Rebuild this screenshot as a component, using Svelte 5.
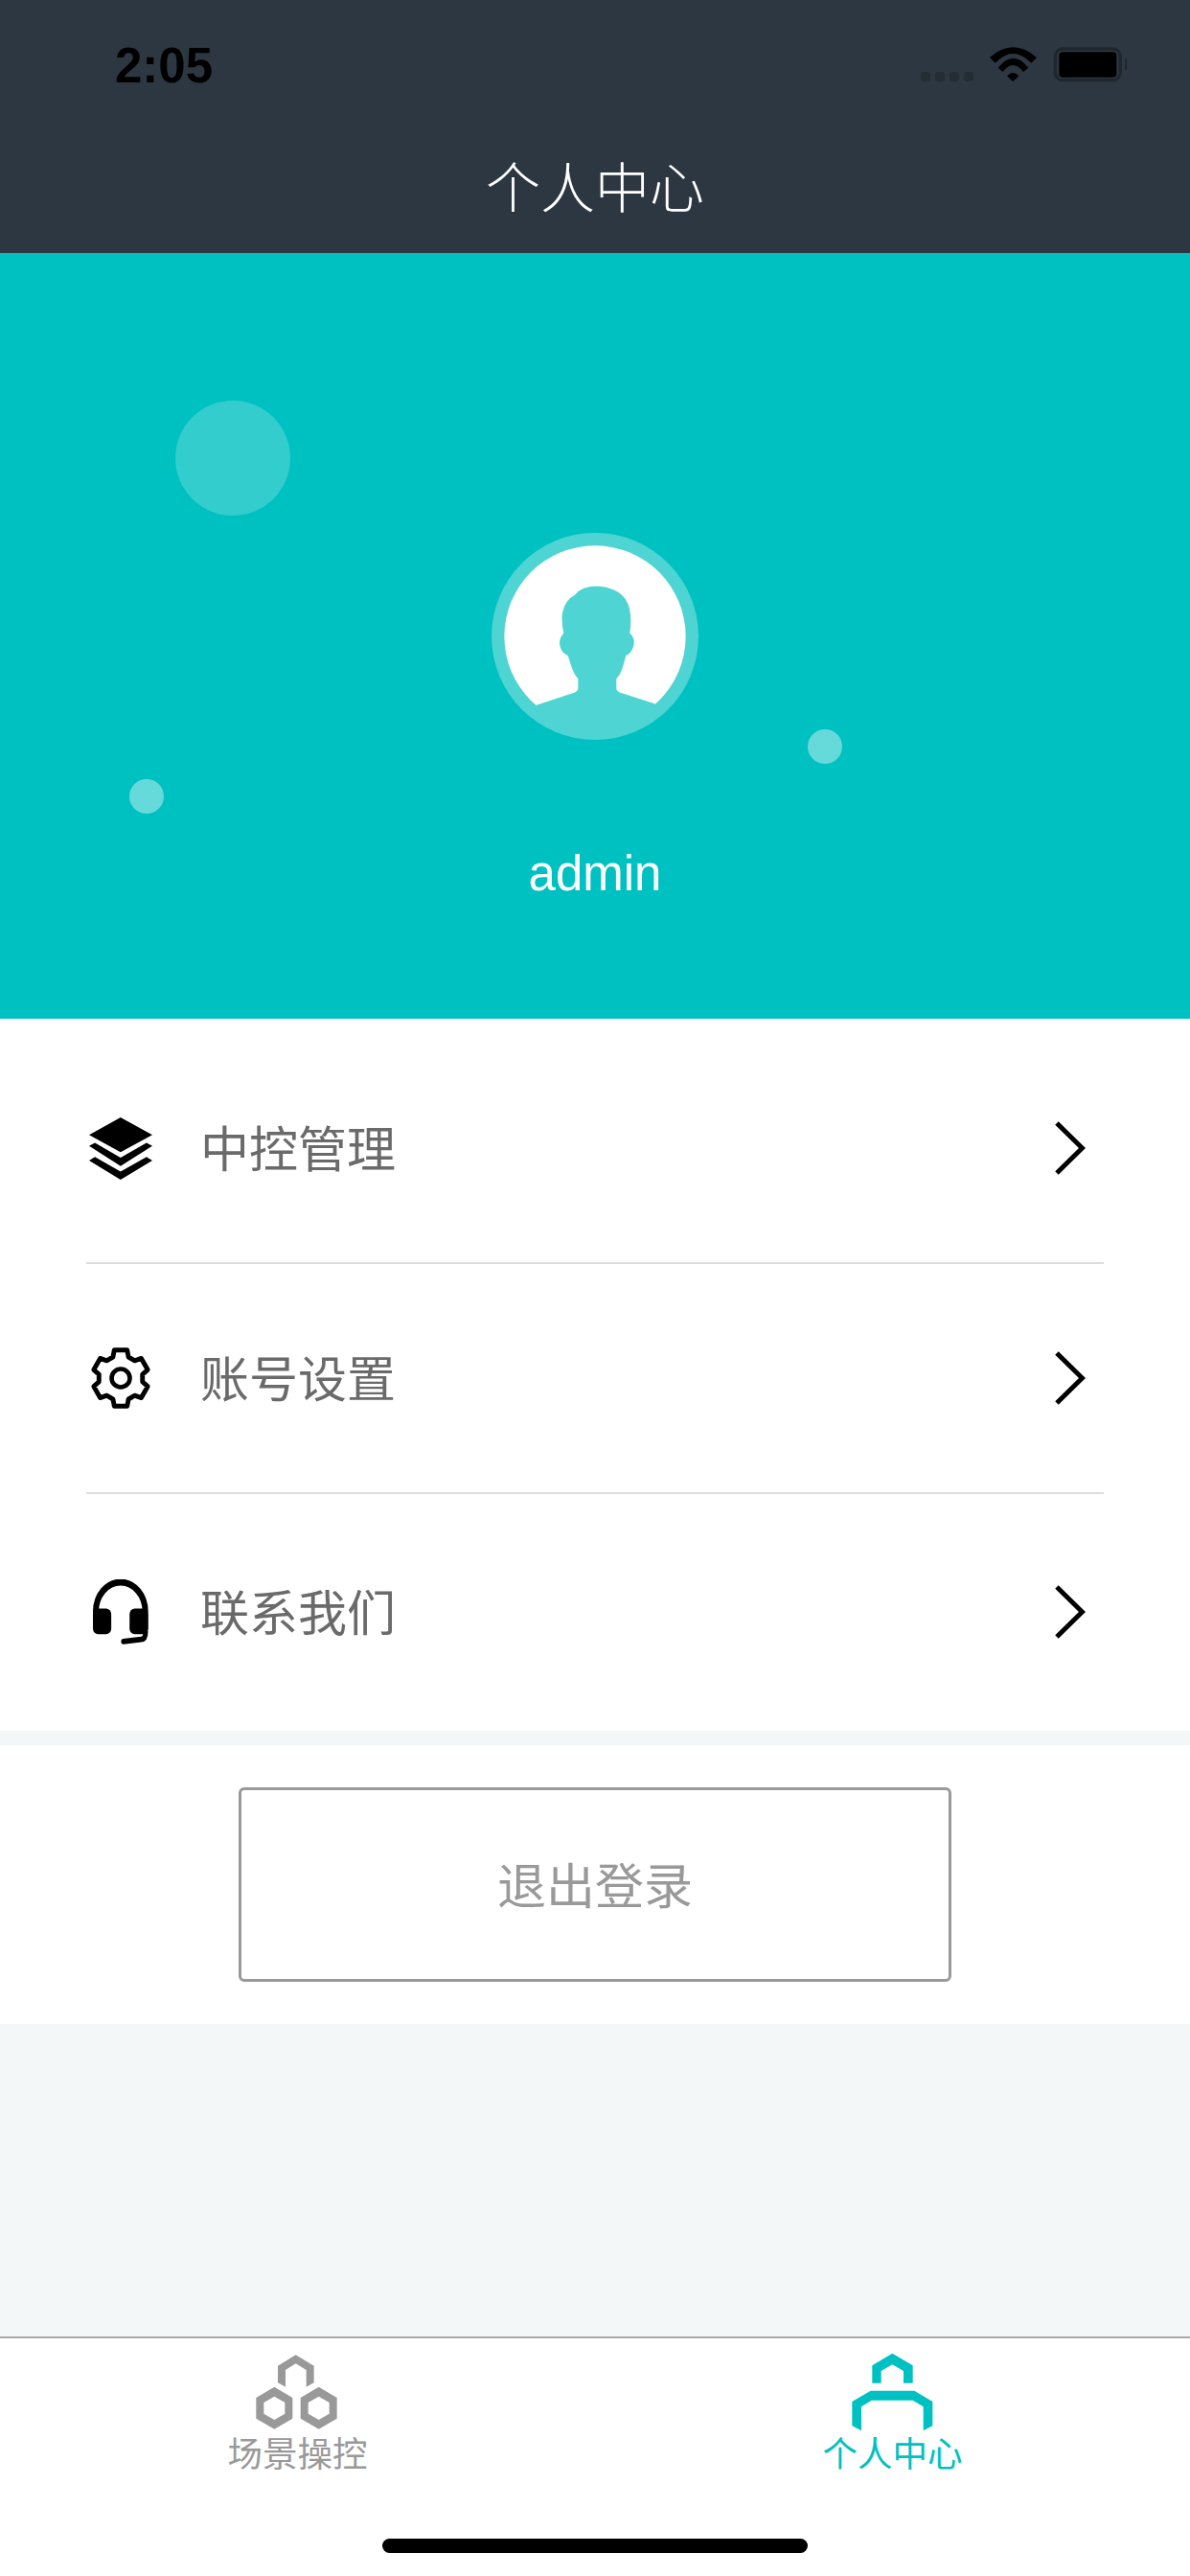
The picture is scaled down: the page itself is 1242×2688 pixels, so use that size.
<script>
	const rows = [
		{ name: "中控管理", icon: "layers" },
		{ name: "账号设置", icon: "gear" },
		{ name: "联系我们", icon: "headset" },
	];

	// six-tooth gear outline, teeth at top and bottom
	function gearPath(R, r) {
		let pts = [];
		for (let i = 0; i < 6; i++) {
			const a = (i * Math.PI) / 3 - Math.PI / 2;
			for (const [rad, da] of [[r, -0.36], [R, -0.23], [R, 0.23], [r, 0.36]]) {
				pts.push(`${(rad * Math.cos(a + da)).toFixed(2)} ${(rad * Math.sin(a + da)).toFixed(2)}`);
			}
		}
		return "M" + pts.join("L") + "Z";
	}
	const gear = gearPath(30, 23.5);
</script>

<div class="page">
	<header class="top">
		<div class="status">
			<span class="time">2:05</span>
			<svg class="status-icons" width="215" height="40" viewBox="90 84 645 120">
				<g fill="#000" fill-opacity="0.2">
					<rect x="90" y="165" width="30" height="30" rx="9" />
					<rect x="135" y="165" width="30" height="30" rx="9" />
					<rect x="180" y="165" width="30" height="30" rx="9" />
					<rect x="225" y="165" width="30" height="30" rx="9" />
				</g>
				<path d="M306 120Q379 56 453 120L436 137Q379 79 323 137Z" />
				<path d="M332 152Q379 92 427 152L411 165Q379 123 347 165Z" />
				<path d="M360 178Q379 158 397 178L379 195Z" />
				<rect x="511" y="93" width="204" height="98" rx="24" fill="none" stroke="#000" stroke-opacity="0.3" stroke-width="10" />
				<rect x="523" y="103" width="180" height="79" rx="12" />
				<path d="M730 123Q741 130 741 142Q741 153 730 160Z" fill-opacity="0.4" />
			</svg>
		</div>
		<h1 class="title">个人中心</h1>
	</header>

	<section class="hero">
		<span class="dot big"></span>
		<span class="dot right"></span>
		<span class="dot left"></span>
		<svg class="avatar" width="216" height="216" viewBox="99 78 648 648">
			<defs>
				<clipPath id="inner"><circle cx="423" cy="402" r="290" /></clipPath>
			</defs>
			<circle cx="423" cy="402" r="324" fill="#4dd4d3" />
			<circle cx="423" cy="402" r="284" fill="#fff" />
			<path
				clip-path="url(#inner)"
				fill="#4dd4d3"
				d="M240 617L358 578Q370 574 370 565V535Q358 522 352 505L338 462Q322 456 315 438Q306 412 325 392Q316 350 322 325Q330 288 360 272Q380 245 428 245Q490 247 518 285Q542 320 532 392Q552 410 542 438Q535 456 520 462L508 505Q502 522 490 535V565Q490 574 502 578L610 613V730H240Z"
			/>
		</svg>
		<div class="name">admin</div>
	</section>

	<ul class="menu">
		{#each rows as row}
			<li class="row">
				<span class="row-icon">
					{#if row.icon === "layers"}
						<svg width="66" height="65" viewBox="70 95 195 170" preserveAspectRatio="none">
							<path d="M167 95L265 143L167 190L70 143Z" />
							<path d="M70 173L88 164L167 205L247 164L265 173L167 228Z" />
							<path d="M70 213L88 203L167 243L247 203L265 213L167 265Z" />
						</svg>
					{:else if row.icon === "gear"}
						<svg width="66" height="66" viewBox="-33 -33 66 66">
							<g transform="scale(0.98 1)">
								<path d={gear} fill="none" stroke="#000" stroke-width="5" stroke-linejoin="round" />
							</g>
							<circle cx="0" cy="0" r="9.5" fill="none" stroke="#000" stroke-width="4.6" />
						</svg>
					{:else}
						<svg width="58" height="68" viewBox="82 1352 173 178" preserveAspectRatio="none">
							<path d="M91 1480V1440A77 80 0 0 1 245 1440V1490" fill="none" stroke="#000" stroke-width="18" />
							<rect x="82" y="1432" width="57" height="70" rx="16" />
							<rect x="196" y="1432" width="57" height="70" rx="16" />
							<path d="M246 1495Q246 1515 232 1516L177 1522" fill="none" stroke="#000" stroke-width="15" stroke-linecap="round" />
						</svg>
					{/if}
				</span>
				<span class="row-name">{row.name}</span>
				<svg class="chevron" width="32" height="60" viewBox="0 0 32 60">
					<path d="M2 4L28.5 30L2 56" fill="none" stroke="#000" stroke-width="5" />
				</svg>
			</li>
		{/each}
	</ul>

	<div class="logout-wrap">
		<button class="logout">退出登录</button>
	</div>

	<div class="spacer"></div>

	<nav class="tabs">
		<div class="tab">
			<svg width="90" height="85" viewBox="200 100 270 255">
				<g fill="#999">
					<path d="M328 113L385 147V200L361 213V160L328 140L296 160V213L272 200V147Z" />
					<path fill-rule="evenodd" d="M261 213L318 247V312L261 345L204 312V247ZM261 243L228 262V297L261 316L294 297V262Z" />
					<path fill-rule="evenodd" d="M400 213L457 247V312L400 345L343 312V247ZM400 243L367 262V297L400 316L433 297V262Z" />
				</g>
			</svg>
			<span class="tab-name">场景操控</span>
		</div>
		<div class="tab active">
			<svg width="90" height="85" viewBox="200 100 270 255">
				<g fill="#00c1c1">
					<path d="M333 108L397 146V201H368V163L333 143L298 163V201H270V146Z" />
					<path d="M265 225H402L459 259V335L430 350V275L397 255H268L236 275V350L207 335V259Z" />
				</g>
			</svg>
			<span class="tab-name">个人中心</span>
		</div>
		<span class="home-bar"></span>
	</nav>
</div>

<style>
	:global(body) {
		margin: 0;
	}
	.page {
		width: 1242px;
		height: 2688px;
		display: flex;
		flex-direction: column;
		background: #f4f7f8;
		font-family: "Noto Sans CJK SC", "Liberation Sans", sans-serif;
	}
	.top {
		height: 264px;
		background: #2d3741;
	}
	.status {
		height: 132px;
		box-sizing: border-box;
		padding: 44px 66px 0 120px;
		display: flex;
		justify-content: space-between;
		align-items: flex-start;
	}
	.time {
		font-family: "Liberation Sans", sans-serif;
		font-weight: 700;
		font-size: 51px;
		line-height: 50px;
		color: #000;
	}
	.status-icons {
		margin-top: 4px;
	}
	.title {
		margin: 0;
		height: 132px;
		line-height: 120px;
		font-size: 57px;
		font-weight: 300;
		color: #fff;
		text-align: center;
	}
	.hero {
		position: relative;
		height: 799px;
		box-sizing: border-box;
		padding-top: 292px;
		background: #00c1c1;
		display: flex;
		flex-direction: column;
		align-items: center;
	}
	.dot {
		position: absolute;
		border-radius: 50%;
		background: #fff;
	}
	.big {
		left: 183px;
		top: 154px;
		width: 120px;
		height: 120px;
		opacity: 0.2;
	}
	.right {
		left: 843px;
		top: 497px;
		width: 36px;
		height: 36px;
		opacity: 0.4;
	}
	.left {
		left: 135px;
		top: 549px;
		width: 36px;
		height: 36px;
		opacity: 0.4;
	}
	.name {
		margin-top: 110px;
		font-family: "Liberation Sans", sans-serif;
		font-size: 51px;
		line-height: 60px;
		color: #fff;
	}
	.menu {
		list-style: none;
		margin: 0;
		padding: 16px 90px 0;
		height: 743px;
		box-sizing: border-box;
		background: #fff;
	}
	.row {
		height: 238px;
		display: flex;
		align-items: center;
		border-bottom: 2px solid #ddd;
	}
	.row:last-child {
		border-bottom: none;
		height: 246px;
	}
	.row-icon {
		width: 70px;
		height: 70px;
		margin-left: 1px;
		margin-right: 48px;
		display: flex;
		align-items: center;
		justify-content: center;
	}
	.row-name {
		flex: 1;
		font-size: 51px;
		line-height: 70px;
		padding-bottom: 4px;
		color: #6a6a6a;
	}
	.chevron {
		margin-right: 19px;
	}
	.logout-wrap {
		margin-top: 15px;
		height: 291px;
		background: #fff;
		box-sizing: border-box;
		padding-top: 44px;
		display: flex;
		justify-content: center;
		align-items: flex-start;
	}
	.logout {
		width: 744px;
		height: 203px;
		box-sizing: border-box;
		border: 3px solid #999;
		border-radius: 6px;
		background: #fff;
		color: #999;
		font-family: inherit;
		font-size: 51px;
		padding: 0 0 4px;
	}
	.spacer {
		flex: 1;
	}
	.tabs {
		position: relative;
		height: 250px;
		box-sizing: border-box;
		border-top: 2px solid #aaa;
		background: #fff;
		display: flex;
	}
	.tab {
		flex: 1;
		display: flex;
		flex-direction: column;
		align-items: center;
		padding-top: 13px;
		color: #999;
	}
	.tab svg {
		display: block;
	}
	.tab.active {
		color: #00c1c1;
	}
	.tab-name {
		font-size: 36.5px;
		line-height: 44px;
		margin-top: -1px;
	}
	.home-bar {
		position: absolute;
		left: 399px;
		bottom: 24px;
		width: 444px;
		height: 15px;
		border-radius: 8px;
		background: #000;
	}
</style>
